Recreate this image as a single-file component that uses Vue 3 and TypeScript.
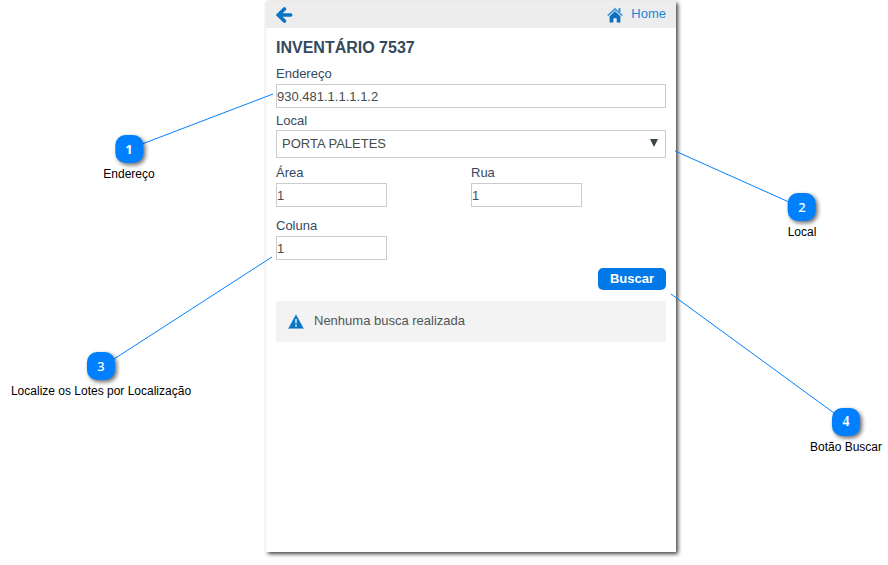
<script setup lang="ts">
import { ref } from 'vue'

interface Callout {
  id: number
  label: string
  x: number
  y: number
  face: string
  line: { x1: number; y1: number; x2: number; y2: number }
}

// Horizontal positions are expressed on a 888-unit wide stage.
const STAGE = 888
const pct = (value: number): string => `${(value / STAGE) * 100}%`

const callouts: Callout[] = [
  { id: 1, label: 'Endereço', x: 129, y: 135, face: 'bold', line: { x1: 273, y1: 94, x2: 142, y2: 144 } },
  { id: 2, label: 'Local', x: 802, y: 193, face: 'plain', line: { x1: 675, y1: 151, x2: 789, y2: 202 } },
  { id: 3, label: 'Localize os Lotes por Localização', x: 101, y: 352, face: 'plain', line: { x1: 272, y1: 257, x2: 114, y2: 359 } },
  { id: 4, label: 'Botão Buscar', x: 846, y: 408, face: 'serif', line: { x1: 671, y1: 294, x2: 834, y2: 413 } },
]

const endereco = ref('930.481.1.1.1.1.2')
const local = ref('PORTA PALETES')
const area = ref('1')
const rua = ref('1')
const coluna = ref('1')
</script>

<template>
  <main class="stage">
    <section class="panel">
      <header class="bar">
        <a class="back" href="#" aria-label="Voltar">
          <svg width="17" height="16" viewBox="0 0 17 16">
            <path d="M8.4 2 2.4 8l6 6M3.5 8h11.2" fill="none" stroke="#0a74c4" stroke-width="3.6" stroke-linecap="round" stroke-linejoin="miter" />
          </svg>
        </a>
        <a class="home" href="#">
          <svg width="16" height="16" viewBox="0 0 16 16">
            <path d="M11.5 1.2h2v4h-2z" fill="#2b8ad0" />
            <path d="M.7 8.6 8 2l7.3 6.6" fill="none" stroke="#4a9ad8" stroke-width="1.7" />
            <path d="M2.6 9.2 8 4.2l5.4 5v6.2H9.7v-4.2H6.4v4.2H2.6z" fill="#0a6fc0" />
          </svg>
          <span>Home</span>
        </a>
      </header>

      <form class="form" @submit.prevent>
        <h1>INVENTÁRIO 7537</h1>
        <label for="endereco">Endereço</label>
        <input id="endereco" v-model="endereco" class="wide" type="text" />

        <label class="local-label" for="local">Local</label>
        <div class="select">
          <select id="local" v-model="local">
            <option>PORTA PALETES</option>
          </select>
          <svg class="caret" width="8" height="8" viewBox="0 0 8 8"><path d="M0 0h8L4 8z" fill="#3c4646" /></svg>
        </div>

        <div class="grid">
          <div class="field">
            <label for="area">Área</label>
            <input id="area" v-model="area" type="text" />
          </div>
          <div class="field">
            <label for="rua">Rua</label>
            <input id="rua" v-model="rua" type="text" />
          </div>
          <div class="field">
            <label for="coluna">Coluna</label>
            <input id="coluna" v-model="coluna" type="text" />
          </div>
        </div>

        <button type="submit">Buscar</button>

        <p class="notice">
          <svg width="16" height="15" viewBox="0 0 16 15">
            <path d="M8 .6 15.6 14.6H.4z" fill="#0a74c4" stroke="#5aa3da" stroke-width=".5" />
            <path d="M7.1 5h1.8l-.3 4.8H7.4z" fill="#d9ebf8" />
            <circle cx="8" cy="11.8" r="1" fill="#d9ebf8" />
          </svg>
          <span>Nenhuma busca realizada</span>
        </p>
      </form>
    </section>

    <svg class="lines" aria-hidden="true">
      <line
        v-for="c in callouts"
        :key="c.id"
        :x1="pct(c.line.x1)"
        :y1="c.line.y1"
        :x2="pct(c.line.x2)"
        :y2="c.line.y2"
      />
    </svg>

    <div
      v-for="c in callouts"
      :key="c.id"
      class="callout"
      :style="{ left: pct(c.x), top: `${c.y}px` }"
    >
      <span class="badge" :class="c.face">{{ c.id }}</span>
      <span class="caption">{{ c.label }}</span>
    </div>
  </main>
</template>

<style>
body {
  background: #fff;
}
</style>

<style scoped>
.stage {
  position: relative;
  display: grid;
  grid-template-columns: 266fr 410fr 212fr;
  box-sizing: border-box;
  min-height: 100vh;
  padding: 1px 0 13px;
  overflow: hidden;
  font: 13px/16px "Liberation Sans", Arial, sans-serif;
}
.panel {
  grid-column: 2;
  min-width: 0;
  background: #fff;
  box-shadow: -1px 0 0 #f0f0f0, 2px 2px 4px rgba(0, 0, 0, 0.75);
}
.bar {
  display: flex;
  align-items: center;
  justify-content: space-between;
  height: 27px;
  padding: 0 10px;
  background: #ededed;
}
.bar svg {
  display: block;
}
.home {
  display: flex;
  align-items: center;
  gap: 8px;
  color: #1a87d7;
  text-decoration: none;
}
.home span {
  padding-bottom: 2px;
}
.form {
  display: flex;
  flex-direction: column;
  padding: 10px 10px 0;
}
h1 {
  margin: 0 0 8px;
  color: #34495e;
  font-size: 16px;
  line-height: 20px;
}
label {
  display: block;
  color: #34495e;
}
input,
select {
  box-sizing: border-box;
  margin: 0;
  border: 1px solid #ccc;
  border-radius: 0;
  outline: 0;
  background: #fff;
  color: #454d4d;
  font: inherit;
}
input {
  height: 24px;
  padding: 0;
}
.wide {
  width: 100%;
  margin-top: 2px;
}
.local-label {
  margin-top: 5px;
}
.select {
  position: relative;
  margin-top: 1px;
}
select {
  display: block;
  width: 100%;
  height: 28px;
  padding: 0 24px 0 5px;
  appearance: none;
}
.caret {
  position: absolute;
  top: 9px;
  right: 8px;
  pointer-events: none;
}
.grid {
  display: grid;
  grid-template-columns: 1fr 1fr;
  row-gap: 11px;
  margin-top: 7px;
}
.field input {
  display: block;
  width: 57%;
  margin-top: 2px;
}
button {
  align-self: flex-end;
  width: 68px;
  height: 22px;
  margin-top: 8px;
  padding: 0;
  border: 0;
  border-radius: 5px;
  background: #0078e7;
  color: #fff;
  font: bold 13px/16px "Liberation Sans", Arial, sans-serif;
}
.notice {
  display: flex;
  align-items: center;
  gap: 10px;
  box-sizing: border-box;
  min-height: 41px;
  margin: 11px 0 0;
  padding: 0 12px;
  background: #f3f3f3;
  color: #505656;
}
.notice span {
  padding-bottom: 2px;
}
.lines {
  position: absolute;
  top: 0;
  left: 0;
  width: 100%;
  height: 100%;
  pointer-events: none;
}
.lines line {
  stroke: #0080ff;
  stroke-width: 1;
}
.callout {
  position: absolute;
  display: flex;
  flex-direction: column;
  align-items: center;
  gap: 4px;
  transform: translateX(-50%);
  color: #000;
  font-size: 12px;
  line-height: 14px;
  white-space: nowrap;
}
.badge {
  width: 28px;
  border-radius: 10px;
  background: #0080ff;
  box-shadow: 2px 2px 4px rgba(0, 0, 0, 0.6);
  color: #fff;
  font: 500 13px/28px "Noto Sans", sans-serif;
  text-align: center;
}
.badge.bold {
  font-weight: bold;
}
.badge.serif {
  font: bold 14px/28px "Liberation Serif", serif;
}
</style>
